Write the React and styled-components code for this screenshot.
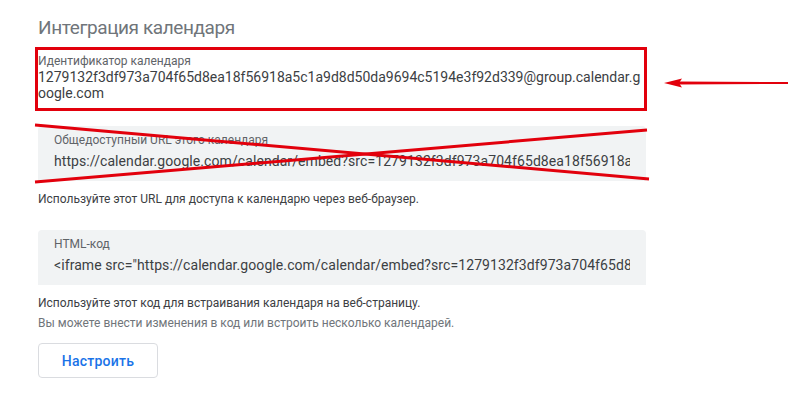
import React from "react";
import styled, { createGlobalStyle } from "styled-components";

const Global = createGlobalStyle`
  html, body { margin: 0; padding: 0; background: #ffffff; }
  body { font-family: Roboto, "Noto Sans", Arial, sans-serif; -webkit-font-smoothing: antialiased; }
`;

const Page = styled.div`
  position: relative;
  width: 608px;
  padding: 16px 0 0 38px;
  display: flex;
  flex-direction: column;
  align-items: flex-start;
`;

const Title = styled.h2`
  margin: 0;
  font-size: 19px;
  line-height: 24px;
  font-weight: 400;
  letter-spacing: -0.4px;
  color: #70757a;
`;

const Highlight = styled.div`
  margin: 7px 0 0 -3px;
  width: 606px;
  height: 55px;
  border: 3px solid #e2000c;
  padding: 3px 0 0 0;
`;

const Label = styled.div`
  font-size: 12px;
  line-height: 16px;
  color: #5f6368;
`;

const IdValue = styled.div`
  font-size: 14px;
  line-height: 16px;
  color: #3c4043;
  word-break: break-all;
`;

const Field = styled.div`
  position: relative;
  box-sizing: border-box;
  width: 608px;
  height: 55px;
  margin-top: ${(p) => p.$top}px;
  padding: 6px 16px 0;
  background: #f1f3f4;
  border-radius: 4px 4px 0 0;
`;

const FieldValue = styled.div`
  margin-top: 3px;
  font-size: 14px;
  line-height: 20px;
  letter-spacing: 0.08px;
  color: #3c4043;
  white-space: nowrap;
  overflow: hidden;
`;

const Helper = styled.p`
  margin: ${(p) => p.$top}px 0 0;
  font-size: 12px;
  line-height: 20px;
  color: ${(p) => (p.$muted ? "#70757a" : "#3c4043")};
`;

const Button = styled.button`
  margin-top: 10px;
  width: 120px;
  height: 35px;
  border: 1px solid #dadce0;
  border-radius: 4px;
  background: #ffffff;
  color: #1a73e8;
  font-family: Roboto, Arial, sans-serif;
  font-size: 14px;
  font-weight: 500;
  letter-spacing: 0.25px;
  padding: 0;
`;

const CrossMark = styled.svg`
  position: absolute;
  left: -3px;
  top: -1px;
  overflow: visible;
  pointer-events: none;
`;

const Arrow = styled.svg`
  position: absolute;
  left: 660px;
  top: 76px;
  overflow: visible;
`;

const RED = "#e2000c";

export default function App() {
  const id =
    "1279132f3df973a704f65d8ea18f56918a5c1a9d8d50da9694c5194e3f92d339@group.calendar.google.com";
  const enc = id.replace("@", "%40");
  return (
    <>
      <Global />
      <Page>
        <Title>Интеграция календаря</Title>
        <Highlight>
          <Label>Идентификатор календаря</Label>
          <IdValue>{id}</IdValue>
        </Highlight>
        <Field $top={15}>
          <Label>Общедоступный URL этого календаря</Label>
          <FieldValue>https://calendar.google.com/calendar/embed?src={enc}</FieldValue>
          <CrossMark width="614" height="58" viewBox="0 0 614 58">
            <line x1="0" y1="0" x2="614" y2="54" stroke={RED} strokeWidth="3" />
            <line x1="0" y1="57" x2="612" y2="5" stroke={RED} strokeWidth="3" />
          </CrossMark>
        </Field>
        <Helper $top={8}>Используйте этот URL для доступа к календарю через веб-браузер.</Helper>
        <Field $top={21}>
          <Label>HTML-код</Label>
          <FieldValue>&lt;iframe src="https://calendar.google.com/calendar/embed?src={enc}"</FieldValue>
        </Field>
        <Helper $top={8}>Используйте этот код для встраивания календаря на веб-страницу.</Helper>
        <Helper $top={0} $muted>
          Вы можете внести изменения в код или встроить несколько календарей.
        </Helper>
        <Button>Настроить</Button>
        <Arrow width="130" height="14" viewBox="0 0 130 14">
          <polygon points="4,7 22,2.5 19,7 22,11.5" fill={RED} />
          <polygon points="18,5.6 128,6 128,8 18,8.4" fill={RED} />
        </Arrow>
      </Page>
    </>
  );
}
